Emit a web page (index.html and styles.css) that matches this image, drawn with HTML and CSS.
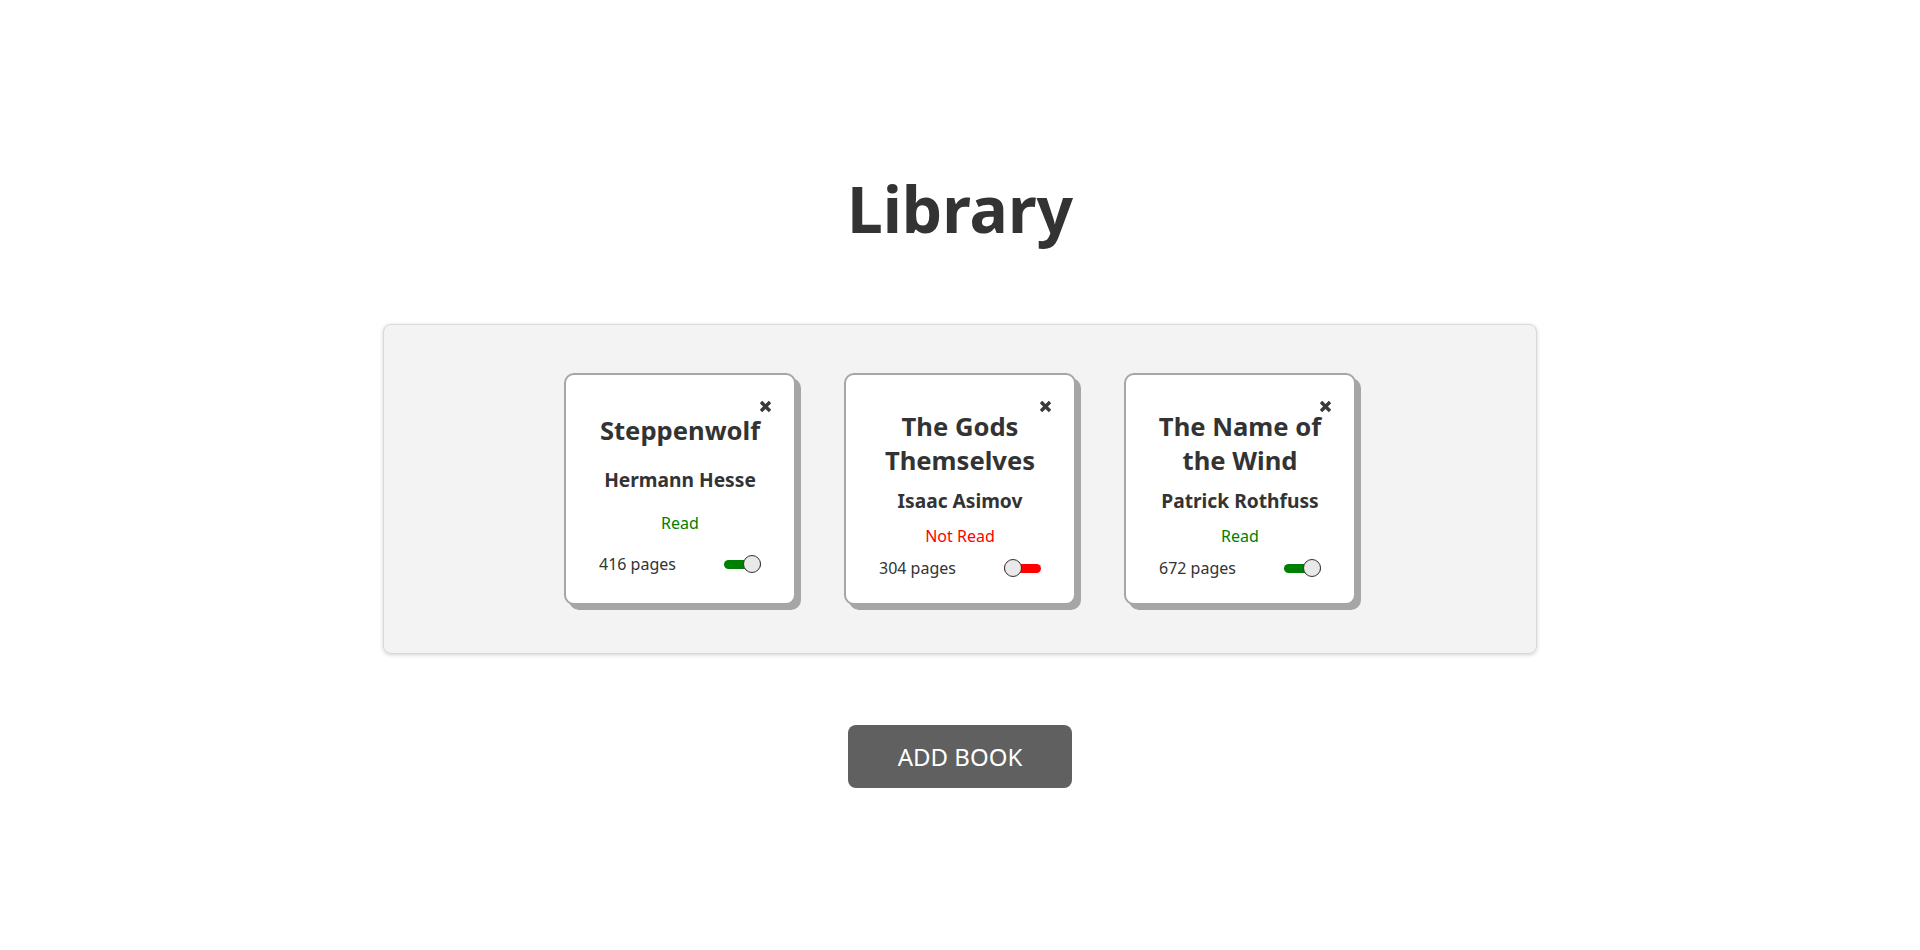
FILE: index.html
```html
<!DOCTYPE html>
<html lang="en">
<head>
<meta charset="utf-8">
<title>Library</title>
<link rel="stylesheet" href="styles.css">
</head>
<body>
<main class="app">
  <h1 class="page-title">Library</h1>
  <section class="library">
    <article class="book">
      <button class="remove" aria-label="Remove"><svg viewBox="0 0 13 13" width="13" height="13"><path d="M2 2 L11 11 M11 2 L2 11" stroke="#3a3a3a" stroke-width="3.4" fill="none"/></svg></button>
      <h2 class="book-title">Steppenwolf</h2>
      <h3 class="book-author">Hermann Hesse</h3>
      <p class="status read">Read</p>
      <div class="book-footer">
        <span class="pages">416 pages</span>
        <span class="toggle on"><span class="track"></span><span class="knob"></span></span>
      </div>
    </article>
    <article class="book">
      <button class="remove" aria-label="Remove"><svg viewBox="0 0 13 13" width="13" height="13"><path d="M2 2 L11 11 M11 2 L2 11" stroke="#3a3a3a" stroke-width="3.4" fill="none"/></svg></button>
      <h2 class="book-title">The Gods Themselves</h2>
      <h3 class="book-author">Isaac Asimov</h3>
      <p class="status not-read">Not Read</p>
      <div class="book-footer">
        <span class="pages">304 pages</span>
        <span class="toggle off"><span class="track"></span><span class="knob"></span></span>
      </div>
    </article>
    <article class="book">
      <button class="remove" aria-label="Remove"><svg viewBox="0 0 13 13" width="13" height="13"><path d="M2 2 L11 11 M11 2 L2 11" stroke="#3a3a3a" stroke-width="3.4" fill="none"/></svg></button>
      <h2 class="book-title">The Name of the Wind</h2>
      <h3 class="book-author">Patrick Rothfuss</h3>
      <p class="status read">Read</p>
      <div class="book-footer">
        <span class="pages">672 pages</span>
        <span class="toggle on"><span class="track"></span><span class="knob"></span></span>
      </div>
    </article>
  </section>
  <button class="add-book">ADD BOOK</button>
</main>
</body>
</html>
```

FILE: styles.css
```css
* { box-sizing: border-box; }

html, body {
  margin: 0;
  padding: 0;
  background: #ffffff;
  font-family: "Noto Sans", "Open Sans", sans-serif;
  color: #333333;
}

.app {
  display: flex;
  flex-direction: column;
  align-items: center;
  padding-top: 165px;
}

.page-title {
  margin: 0;
  font-size: 64px;
  font-weight: 700;
  line-height: normal;
  color: #333333;
}

.library {
  margin-top: 72px;
  width: 1154px;
  padding: 48px 0;
  background: #f3f3f3;
  border: 1px solid #d9d9d9;
  border-radius: 8px;
  box-shadow: 0 1px 4px rgba(0, 0, 0, 0.18);
  display: flex;
  justify-content: center;
  gap: 48px;
}

.book {
  position: relative;
  width: 232px;
  height: 232px;
  background: #ffffff;
  border: 2px solid #a6a6a6;
  border-radius: 10px;
  box-shadow: 5px 5px 0 #a6a6a6;
  padding: 30px 12px 19px;
  display: flex;
  flex-direction: column;
  justify-content: space-around;
  align-items: stretch;
  text-align: center;
}

.remove {
  position: absolute;
  top: 24px;
  right: 22px;
  width: 14px;
  height: 14px;
  padding: 0;
  margin: 0;
  border: none;
  background: none;
  display: flex;
  align-items: center;
  justify-content: center;
}

.book-title {
  margin: 0;
  font-size: 25.6px;
  font-weight: 700;
  line-height: 34px;
}

.book-author {
  margin: 0;
  font-size: 19.2px;
  font-weight: 700;
  line-height: 26px;
}

.status {
  margin: 0;
  font-size: 16px;
  line-height: 22px;
}

.status.read { color: #008000; }
.status.not-read { color: #ff0000; }

.book-footer {
  display: flex;
  justify-content: space-between;
  align-items: center;
  height: 22px;
  padding: 0 21px;
}

.pages {
  font-size: 16px;
  line-height: 22px;
}

.toggle {
  position: relative;
  width: 37px;
  height: 18px;
  display: block;
}

.track {
  position: absolute;
  left: 0;
  right: 0;
  top: 5px;
  height: 9px;
  border-radius: 5px;
}

.toggle.on .track { background: #008000; }
.toggle.off .track { background: #ff0000; }

.knob {
  position: absolute;
  top: 0;
  width: 18px;
  height: 18px;
  border-radius: 50%;
  background: #e9e9e9;
  border: 1px solid #333333;
}

.toggle.on .knob { right: 0; }
.toggle.off .knob { left: 0; }

.add-book {
  margin-top: 71px;
  width: 224px;
  height: 63px;
  border: none;
  border-radius: 8px;
  background: #606060;
  color: #ffffff;
  font-family: "Noto Sans", "Open Sans", sans-serif;
  font-size: 24px;
  font-weight: 400;
}
```
